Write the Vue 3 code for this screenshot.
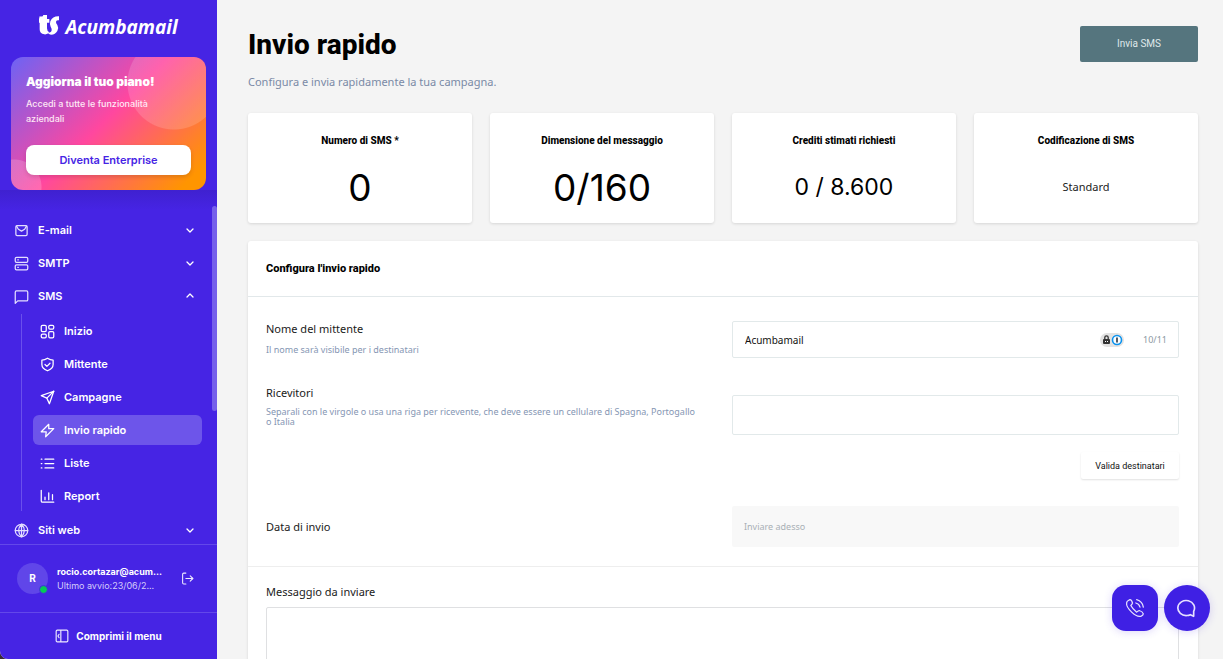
<script setup>
import { ref } from 'vue'

const mainMenu = [
  { label: 'E-mail', icon: 'mail', open: false },
  { label: 'SMTP', icon: 'server', open: false },
  { label: 'SMS', icon: 'message', open: true },
]

const smsMenu = [
  { label: 'Inizio', icon: 'grid' },
  { label: 'Mittente', icon: 'shield' },
  { label: 'Campagne', icon: 'send' },
  { label: 'Invio rapido', icon: 'zap', active: true },
  { label: 'Liste', icon: 'list' },
  { label: 'Report', icon: 'chart' },
]

const icons = {
  mail: ['M5 4h14a2 2 0 0 1 2 2v12a2 2 0 0 1-2 2H5a2 2 0 0 1-2-2V6a2 2 0 0 1 2-2z', 'M4 5l3 5 5 3 5-3 3-5'],
  server: [
    'M4 2h16a2 2 0 0 1 2 2v4a2 2 0 0 1-2 2H4a2 2 0 0 1-2-2V4a2 2 0 0 1 2-2z',
    'M4 14h16a2 2 0 0 1 2 2v4a2 2 0 0 1-2 2H4a2 2 0 0 1-2-2v-4a2 2 0 0 1 2-2z',
    'M6 6h1M6 18h1',
  ],
  message: ['M4 3h16a2 2 0 0 1 2 2v12a2 2 0 0 1-2 2H6l-4 4V5a2 2 0 0 1 2-2z'],
  grid: [
    'M4 2h4a2 2 0 0 1 2 2v6a2 2 0 0 1-2 2H4a2 2 0 0 1-2-2V4a2 2 0 0 1 2-2z',
    'M16 2h4a2 2 0 0 1 2 2v2a2 2 0 0 1-2 2h-4a2 2 0 0 1-2-2V4a2 2 0 0 1 2-2z',
    'M16 12h4a2 2 0 0 1 2 2v6a2 2 0 0 1-2 2h-4a2 2 0 0 1-2-2v-6a2 2 0 0 1 2-2z',
    'M4 16h4a2 2 0 0 1 2 2v2a2 2 0 0 1-2 2H4a2 2 0 0 1-2-2v-2a2 2 0 0 1 2-2z',
  ],
  shield: ['M12 2c3 2 6 3 9 3v7c0 5-4 8-9 10-5-2-9-5-9-10V5c3 0 6-1 9-3z', 'M8 12l3 3 5-5'],
  send: ['M22 2L15 22l-4-9-9-4z', 'M22 2L11 13'],
  zap: ['M14 2L2 14h8l-1 8L22 9h-8z'],
  list: ['M8 5h14M8 12h14M8 19h14M2 5h1M2 12h1M2 19h1'],
  chart: ['M2 2v17a2 2 0 0 0 2 2h18', 'M8 17v-4M14 17V6M20 17V9'],
  globe: [
    'M12 2a10 10 0 1 0 0 20 10 10 0 0 0 0-20z',
    'M12 2c-6 6-6 14 0 20M12 2c6 6 6 14 0 20M2 12h20M12 2v20',
  ],
}

const sender = ref('Acumbamail')
const recipients = ref('')
const message = ref('')
</script>

<template>
  <div class="app">
    <aside class="sidebar">
      <div class="brand">
        <svg class="brand-mark" viewBox="0 0 60 60" aria-hidden="true">
          <path d="M2 4Q13 6 13 0H24V12H31V23H24V40Q24 49 31 52Q25 59 16 58Q2 57 2 43V23H0V12Z" />
          <path d="M60 4V16Q51 14 51 21Q51 25 55 30Q60 38 55 48Q49 59 36 59Q29 58 26 53Q37 54 38 46Q39 41 35 35Q31 28 34 19Q41 3 60 4Z" />
        </svg>
        <span>Acumbamail</span>
      </div>

      <section class="promo">
        <h2>Aggiorna il tuo piano!</h2>
        <p>Accedi a tutte le funzionalità aziendali</p>
        <button type="button">Diventa Enterprise</button>
      </section>

      <nav class="menu">
        <a v-for="item in mainMenu" :key="item.label" href="#" class="menu-item">
          <svg class="icon" viewBox="0 0 24 24"><path v-for="d in icons[item.icon]" :key="d" :d="d" /></svg>
          <span>{{ item.label }}</span>
          <svg class="chevron" viewBox="0 0 10 10"><path :d="item.open ? 'M2 6l3-3 3 3' : 'M2 4l3 3 3-3'" /></svg>
        </a>
        <div class="submenu">
          <a
            v-for="item in smsMenu"
            :key="item.label"
            href="#"
            class="sub-item"
            :class="{ active: item.active }"
          >
            <svg class="icon" viewBox="0 0 24 24"><path v-for="d in icons[item.icon]" :key="d" :d="d" /></svg>
            <span>{{ item.label }}</span>
          </a>
        </div>
        <a href="#" class="menu-item">
          <svg class="icon" viewBox="0 0 24 24"><path v-for="d in icons.globe" :key="d" :d="d" /></svg>
          <span>Siti web</span>
          <svg class="chevron" viewBox="0 0 10 10"><path d="M2 4l3 3 3-3" /></svg>
        </a>
        <div class="scroll-thumb"></div>
      </nav>

      <div class="user">
        <div class="avatar">R<i></i></div>
        <div class="user-text">
          <strong>rocio.cortazar@acum...</strong>
          <span>Ultimo avvio:23/06/2...</span>
        </div>
        <button type="button" aria-label="Esci">
          <svg viewBox="0 0 24 24"><path d="M9 2H5a2 2 0 0 0-2 2v16a2 2 0 0 0 2 2h4M9 12h13M17 7l5 5-5 5" /></svg>
        </button>
      </div>

      <button type="button" class="collapse">
        <svg viewBox="0 0 24 24"><path d="M4 2h16a2 2 0 0 1 2 2v16a2 2 0 0 1-2 2H4a2 2 0 0 1-2-2V4a2 2 0 0 1 2-2zM10 2v20M7 9l-2 3 2 3" /></svg>
        Comprimi il menu
      </button>
    </aside>

    <main class="content">
      <header class="page-head">
        <div>
          <h1>Invio rapido</h1>
          <p>Configura e invia rapidamente la tua campagna.</p>
        </div>
        <button type="button" class="send">Invia SMS</button>
      </header>

      <section class="stats">
        <article class="stat">
          <h3>Numero di SMS *</h3>
          <div class="large">0</div>
        </article>
        <article class="stat">
          <h3>Dimensione del messaggio</h3>
          <div class="large">0/160</div>
        </article>
        <article class="stat">
          <h3>Crediti stimati richiesti</h3>
          <div class="medium">0 / 8.600</div>
        </article>
        <article class="stat">
          <h3>Codificazione di SMS</h3>
          <div class="small">Standard</div>
        </article>
      </section>

      <form class="panel" @submit.prevent>
        <h2>Configura l'invio rapido</h2>

        <div class="fields">
          <div class="row">
            <div class="label">
              <label for="sender">Nome del mittente</label>
              <p>Il nome sarà visibile per i destinatari</p>
            </div>
            <div class="sender-box">
              <input id="sender" v-model="sender" type="text" maxlength="11" />
              <svg class="keys" viewBox="0 0 24 14" aria-hidden="true">
                <rect width="24" height="14" rx="7" fill="#e2e2e2" />
                <path d="M4.800 6V4.500a1.700 1.700 0 0 1 3.400 0V6" fill="none" stroke="#333" stroke-width="1.300" />
                <rect x="3" y="6" width="7" height="5" rx="1" fill="#333" />
                <path d="M5 8.500h1M7 8.500h1" stroke="#fff" />
                <circle cx="17" cy="7" r="4.500" fill="#fff" stroke="#0a93f0" stroke-width="1.600" />
                <path d="M17 4.500v5" stroke="#234" stroke-width="1.600" />
              </svg>
              <span class="count">{{ sender.length }}/11</span>
            </div>
          </div>

          <div class="row recipients">
            <div class="label tight">
              <label for="recipients">Ricevitori</label>
              <p>Separali con le virgole o usa una riga per ricevente, che deve essere un cellulare di Spagna, Portogallo o&nbsp;Italia</p>
            </div>
            <div class="recipients-box">
              <textarea id="recipients" v-model="recipients"></textarea>
              <button type="button">Valida destinatari</button>
            </div>
          </div>

          <div class="row date">
            <label for="date">Data di invio</label>
            <input id="date" type="text" placeholder="Inviare adesso" disabled />
          </div>
        </div>

        <div class="message">
          <label for="message">Messaggio da inviare</label>
          <textarea id="message" v-model="message"></textarea>
        </div>
      </form>
    </main>

    <div class="floating">
      <button type="button" class="phone" aria-label="Telefono">
        <svg viewBox="0 0 24 24">
          <path d="M4 3l2-1q2 0 3 4 0 1-2 3 2 4 7 8 2-2 3-2 4 1 5 4 0 2-3 3-5 1-11-5Q1 10 2 6q0-2 2-3z" />
          <path d="M13 6q4 1 5 5M14 2q7 2 8 9" />
        </svg>
      </button>
      <button type="button" class="chat" aria-label="Chat">
        <svg viewBox="0 0 24 24"><path d="M20 16v6l-4-2q-2 1-4 1A10 9 0 1 1 20 16z" /></svg>
      </button>
    </div>
  </div>
</template>

<style>
html {
  background: #3a2a35;
}
body {
  margin: 0;
}
</style>

<style scoped>
* {
  box-sizing: border-box;
}
h1,
h2,
h3,
p {
  margin: 0;
}
button,
input,
textarea {
  font: inherit;
}
button {
  cursor: pointer;
  border: 0;
  padding: 0;
}
svg {
  flex: none;
}
.app {
  display: flex;
  height: 100vh;
  overflow: hidden;
  border-bottom-left-radius: 8px;
  background: #f4f4f4;
  color: #000;
  font-family: "Noto Sans", sans-serif;
}

.sidebar {
  display: flex;
  flex-direction: column;
  width: 217px;
  flex: none;
  background: #4624e4;
  color: #fff;
  font-family: Inter, sans-serif;
}
.brand {
  display: flex;
  align-items: center;
  justify-content: center;
  gap: 6px;
  height: 57px;
  padding-bottom: 4px;
  font: italic 700 19px/24px "Open Sans", sans-serif;
}
.brand-mark {
  width: 20px;
  height: 20px;
  margin-bottom: 3px;
  fill: #fff;
}
.promo {
  position: relative;
  flex: none;
  height: 133px;
  margin: 0 11px;
  padding: 16px 15px 15px;
  overflow: hidden;
  border-radius: 12px;
  display: flex;
  flex-direction: column;
  background:
    radial-gradient(circle at 163px 26px, #ffffff26 46px, transparent 47px),
    radial-gradient(circle at 3px 130px, #ffffff30 27px, transparent 28px),
    linear-gradient(135deg, #6c63f5 0%, #ff479f 48%, #ff9500 92%);
}
.promo h2 {
  font-size: 12px;
  line-height: 18px;
  font-weight: 900;
}
.promo p {
  margin-top: 5px;
  font-size: 9px;
  line-height: 15px;
  font-weight: 500;
  color: #ffe8f5;
  padding-right: 20px;
}
.promo button {
  margin-top: auto;
  height: 30px;
  border-radius: 8px;
  background: #fff;
  color: #4624e4;
  font-size: 11px;
  font-weight: 600;
  box-shadow: 0 2px 4px #0002;
}
.menu {
  position: relative;
  flex: 1;
  min-height: 0;
  overflow: hidden;
  padding: 25px 15px 0 14px;
  background: linear-gradient(#3f21d0, #4624e4 20px);
}
.menu-item,
.sub-item {
  display: flex;
  align-items: center;
  color: #fff;
  text-decoration: none;
  font-size: 11px;
  font-weight: 600;
  line-height: 30px;
  height: 30px;
}
.menu-item {
  gap: 9px;
  padding-right: 7px;
  margin-bottom: 3px;
}
.icon {
  width: 15px;
  height: 15px;
  fill: none;
  stroke: #e4deff;
  stroke-width: 2;
  stroke-linecap: round;
  stroke-linejoin: round;
}
.sub-item .icon {
  stroke: #fff;
}
.chevron {
  width: 10px;
  height: 10px;
  margin-left: auto;
  fill: none;
  stroke: #fff;
  stroke-width: 1.3;
  stroke-linecap: round;
  stroke-linejoin: round;
}
.submenu {
  display: flex;
  flex-direction: column;
  gap: 3px;
  margin: 0 0 4px 7px;
  padding: 2px 0 0 11px;
  border-left: 1px solid #6a50ec;
}
.sub-item {
  gap: 9px;
  padding-left: 7px;
  border-radius: 6px;
}
.sub-item.active {
  background: #6d55ea;
}
.scroll-thumb {
  position: absolute;
  right: 0;
  top: 16px;
  width: 5px;
  height: 205px;
  border-radius: 3px;
  background: #7660eb;
}
.user {
  display: flex;
  align-items: center;
  flex: none;
  height: 68px;
  padding: 0 23px 0 17px;
  border-top: 1px solid #6348e9;
}
.avatar {
  position: relative;
  flex: none;
  width: 31px;
  height: 31px;
  border-radius: 50%;
  background: #6046e9;
  font-size: 10px;
  font-weight: 700;
  line-height: 31px;
  text-align: center;
}
.avatar i {
  position: absolute;
  right: 0;
  bottom: 0;
  width: 9px;
  height: 9px;
  border: 1px solid #4624e4;
  border-radius: 50%;
  background: #05c957;
}
.user-text {
  flex: 1;
  margin-left: 9px;
  font-size: 9px;
  line-height: 14px;
  white-space: nowrap;
}
.user-text strong,
.user-text span {
  display: block;
}
.user-text strong {
  font-weight: 700;
}
.user-text span {
  color: #d5cdfa;
}
.user button,
.collapse {
  background: none;
  color: #fff;
}
.user svg,
.collapse svg {
  display: block;
  width: 13px;
  height: 13px;
  fill: none;
  stroke: #eeeaff;
  stroke-width: 2;
  stroke-linecap: round;
  stroke-linejoin: round;
}
.collapse {
  display: flex;
  align-items: center;
  justify-content: center;
  gap: 7px;
  flex: none;
  height: 47px;
  border-top: 1px solid #6348e9;
  font-size: 10px;
  font-weight: 700;
}
.collapse svg {
  width: 14px;
  height: 14px;
}

.content {
  flex: 1;
  min-width: 0;
  overflow: hidden;
  padding: 26px 25px 0 31px;
}
.page-head {
  display: flex;
  justify-content: space-between;
  align-items: flex-start;
  height: 87px;
}
.page-head h1 {
  font: 800 28px/38px Roboto, sans-serif;
}
.page-head p {
  margin-top: 10px;
  font-size: 11px;
  line-height: 16px;
  color: #7a8aa6;
}
.send {
  width: 118px;
  height: 36px;
  border-radius: 2px;
  background: #55757e;
  color: #dfe8ea;
  font: 400 10px/16px Roboto, sans-serif;
}
.stats {
  display: grid;
  grid-template-columns: repeat(4, 1fr);
  gap: 18px;
}
.stat {
  display: flex;
  flex-direction: column;
  align-items: center;
  height: 110px;
  padding-top: 20px;
  border-radius: 3px;
  background: #fff;
  box-shadow: 0 1px 3px #0000001f;
}
.stat h3 {
  font: 800 10px/16px Roboto, sans-serif;
}
.stat div {
  display: flex;
  align-items: center;
  height: 48px;
  margin-top: 14px;
}
.stat .large {
  font-size: 37px;
  font-family: Inter, sans-serif;
}
.stat .medium {
  font-family: Inter, sans-serif;
  font-size: 23px;
}
.stat .small {
  font-size: 11px;
  height: 46px;
  color: #222;
}
.panel {
  margin-top: 18px;
  border-radius: 3px;
  background: #fff;
  box-shadow: 0 1px 3px #0000001f;
}
.panel h2 {
  height: 56px;
  padding-left: 18px;
  border-bottom: 1px solid #e2e8ea;
  font: 800 11px/55px Roboto, sans-serif;
}
.fields {
  padding: 24px 19px 19px 18px;
  border-bottom: 1px solid #eee;
}
.row {
  display: grid;
  grid-template-columns: 1fr 1fr;
  gap: 19px;
}
.panel label {
  display: block;
  font-size: 11px;
  line-height: 16px;
  color: #1a1a1a;
}
.label p {
  margin-top: 6px;
  font-size: 9px;
  line-height: 14px;
  color: #8596b3;
}
.label.tight p {
  margin-top: 6px;
  line-height: 10px;
}
.sender-box {
  display: flex;
  align-items: center;
  height: 37px;
  padding: 0 11px 0 12px;
  border: 1px solid #e2e9ea;
  border-radius: 2px;
}
.sender-box input {
  flex: 1;
  min-width: 0;
  padding: 0;
  border: 0;
  outline: 0;
  background: none;
  font-size: 10px;
  color: #111;
}
.keys {
  width: 24px;
  height: 14px;
  margin-right: 19px;
}
.count {
  font-size: 9px;
  color: #8c98a3;
}
.recipients {
  margin-top: 27px;
}
.recipients-box {
  display: flex;
  flex-direction: column;
  align-items: flex-end;
  padding-top: 10px;
}
textarea {
  display: block;
  width: 100%;
  height: 40px;
  resize: none;
  border: 1px solid #e2e9ea;
  border-radius: 2px;
  background: #fff;
  outline: 0;
}
.recipients-box button {
  width: 98px;
  height: 27px;
  margin-top: 17px;
  border-radius: 2px;
  background: #fff;
  color: #111;
  font: 400 9px/14px Roboto, sans-serif;
  box-shadow: 0 1px 2px #0000001f;
}
.date {
  margin-top: 27px;
  align-items: center;
}
.date input {
  width: 100%;
  height: 41px;
  padding: 0 12px;
  border: 0;
  border-radius: 2px;
  background: #f8f8f8;
  font-size: 9px;
}
.date input::placeholder {
  color: #a9b0b6;
  opacity: 1;
}
.message {
  padding: 17px 19px 18px 18px;
}
.message textarea {
  height: 120px;
  margin-top: 7px;
  border-color: #dfe0e2;
}
.floating {
  position: absolute;
  right: 13px;
  bottom: 28px;
  display: flex;
  gap: 6px;
}
.floating button {
  display: grid;
  place-items: center;
  width: 46px;
  height: 46px;
  border-radius: 14px;
  background: #3f20e4;
  box-shadow: 0 1px 8px #4624e430;
}
.floating .chat {
  border-radius: 50%;
}
.floating svg {
  width: 20px;
  height: 20px;
  fill: none;
  stroke: #e6e0ff;
  stroke-width: 1.5;
  stroke-linejoin: round;
  stroke-linecap: round;
}
.floating .chat svg {
  stroke-width: 2;
}
</style>
